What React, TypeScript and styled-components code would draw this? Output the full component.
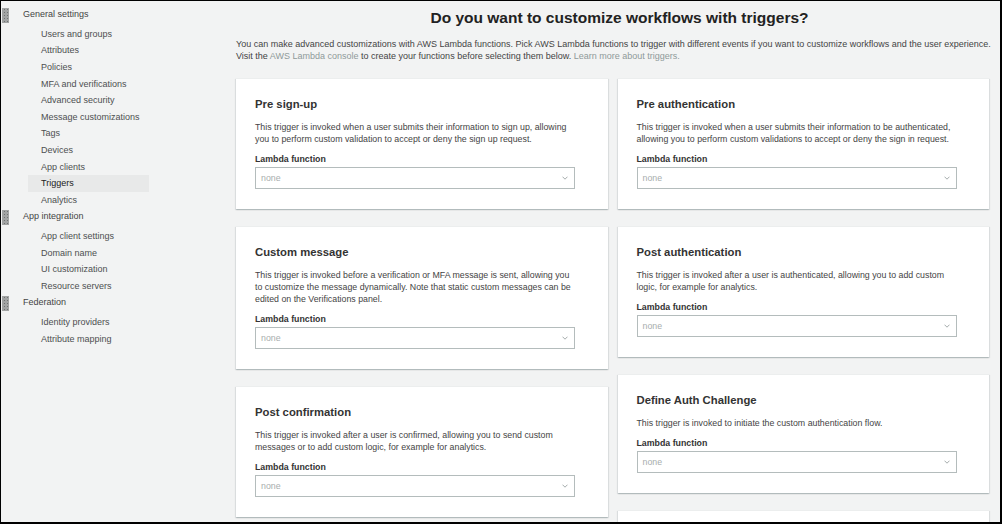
import React from "react";
import styled, { createGlobalStyle } from "styled-components";

const GlobalStyle = createGlobalStyle`
  html, body { margin: 0; padding: 0; }
  body { font-family: "Liberation Sans", Arial, sans-serif; background: #ffffff; }
  * { box-sizing: border-box; }
`;

const Frame = styled.div`
  width: 1002px;
  height: 524px;
  border-style: solid;
  border-color: #000;
  border-width: 1px 2px 2px 1px;
  background: #f2f3f3;
  display: flex;
  overflow: hidden;
  color: #444;
`;

const Sidebar = styled.nav`
  width: 220px;
  flex-shrink: 0;
  padding-top: 5px;
  display: flex;
  flex-direction: column;
`;

const GroupHeader = styled.div`
  height: 16.6px;
  margin-bottom: 3px;
  display: flex;
  align-items: center;
  font-size: 9px;
  color: #444;
`;

const Handle = styled.span`
  width: 7px;
  height: 15px;
  margin: 2px 14px 0 1px;
  background-color: #a2a4a4;
  background-image: radial-gradient(circle, #6f7272 0.7px, transparent 0.9px);
  background-size: 3px 3px;
  background-position: 1px 0;
`;

const NavItem = styled.div<{ $active?: boolean }>`
  height: 16.6px;
  width: 121px;
  margin-left: 27px;
  padding-left: 13px;
  display: flex;
  align-items: center;
  font-size: 9px;
  color: ${(p) => (p.$active ? "#222" : "#4d4f50")};
  background: ${(p) => (p.$active ? "#e8e9e9" : "transparent")};
`;

const Main = styled.main`
  flex: 1;
  padding: 7px 11px 0 15px;
  display: flex;
  flex-direction: column;
  min-width: 0;
`;

const Heading = styled.h1`
  margin: 0;
  font-size: 15.5px;
  line-height: 20px;
  font-weight: 700;
  color: #222;
  text-align: center;
  padding-left: 14px;
`;

const Intro = styled.p`
  margin: 10px 0 0 0;
  font-size: 9px;
  line-height: 12px;
  color: #444;
  white-space: nowrap;
`;

const Link = styled.a`
  color: #8f9a9a;
  text-decoration: none;
`;

const Columns = styled.div`
  margin-top: 16px;
  display: grid;
  grid-template-columns: 1fr 1fr;
  column-gap: 10px;
  align-items: start;
`;

const Column = styled.div`
  display: flex;
  flex-direction: column;
  gap: 17px;
`;

const Card = styled.section`
  background: #fff;
  border-top: 1px solid #eceeee;
  box-shadow: 0 1px 1px rgba(0, 28, 36, 0.14), 1px 1px 1px rgba(0, 28, 36, 0.07),
    -1px 1px 1px rgba(0, 28, 36, 0.07);
  padding: 17px 20px 20px 19px;
`;

const CardStub = styled(Card)`
  height: 40px;
`;

const CardTitle = styled.h2`
  margin: 0;
  font-size: 11.3px;
  line-height: 16px;
  font-weight: 700;
  color: #333;
`;

const CardText = styled.p`
  margin: 9px 0 0 0;
  max-width: 324px;
  font-size: 8.8px;
  line-height: 12px;
  color: #444;
`;

const FieldLabel = styled.div`
  margin-top: 8px;
  font-size: 8.8px;
  line-height: 12px;
  font-weight: 700;
  color: #333;
`;

const SelectBox = styled.div`
  margin-top: 2px;
  width: 320px;
  height: 22px;
  border: 1px solid #b4bcbc;
  background: #fff;
  display: flex;
  align-items: center;
  justify-content: space-between;
  padding: 0 6px 0 5px;
  font-size: 8.8px;
  color: #a8aeae;
`;

const Chevron = () => (
  <svg width="6" height="4" viewBox="0 0 6 4" aria-hidden="true">
    <polyline points="0.5,0.7 3,3.2 5.5,0.7" fill="none" stroke="#9aa1a1" strokeWidth="0.9" />
  </svg>
);

type Trigger = { title: string; text: string };

const leftTriggers: Trigger[] = [
  {
    title: "Pre sign-up",
    text: "This trigger is invoked when a user submits their information to sign up, allowing you to perform custom validation to accept or deny the sign up request.",
  },
  {
    title: "Custom message",
    text: "This trigger is invoked before a verification or MFA message is sent, allowing you to customize the message dynamically. Note that static custom messages can be edited on the Verifications panel.",
  },
  {
    title: "Post confirmation",
    text: "This trigger is invoked after a user is confirmed, allowing you to send custom messages or to add custom logic, for example for analytics.",
  },
];

const rightTriggers: Trigger[] = [
  {
    title: "Pre authentication",
    text: "This trigger is invoked when a user submits their information to be authenticated, allowing you to perform custom validations to accept or deny the sign in request.",
  },
  {
    title: "Post authentication",
    text: "This trigger is invoked after a user is authenticated, allowing you to add custom logic, for example for analytics.",
  },
  {
    title: "Define Auth Challenge",
    text: "This trigger is invoked to initiate the custom authentication flow.",
  },
];

const TriggerCard = ({ t }: { t: Trigger }) => (
  <Card>
    <CardTitle>{t.title}</CardTitle>
    <CardText>{t.text}</CardText>
    <FieldLabel>Lambda function</FieldLabel>
    <SelectBox>
      <span>none</span>
      <Chevron />
    </SelectBox>
  </Card>
);

const nav = [
  {
    group: "General settings",
    items: [
      "Users and groups",
      "Attributes",
      "Policies",
      "MFA and verifications",
      "Advanced security",
      "Message customizations",
      "Tags",
      "Devices",
      "App clients",
      "Triggers",
      "Analytics",
    ],
  },
  {
    group: "App integration",
    items: ["App client settings", "Domain name", "UI customization", "Resource servers"],
  },
  { group: "Federation", items: ["Identity providers", "Attribute mapping"] },
];

export default function App() {
  return (
    <>
      <GlobalStyle />
      <Frame>
        <Sidebar>
          {nav.map((g) => (
            <React.Fragment key={g.group}>
              <GroupHeader>
                <Handle />
                {g.group}
              </GroupHeader>
              {g.items.map((i) => (
                <NavItem key={i} $active={i === "Triggers"}>
                  {i}
                </NavItem>
              ))}
            </React.Fragment>
          ))}
        </Sidebar>
        <Main>
          <Heading>Do you want to customize workflows with triggers?</Heading>
          <Intro>
            You can make advanced customizations with AWS Lambda functions. Pick AWS Lambda functions to trigger with
            different events if you want to customize workflows and the user experience.
            <br />
            Visit the <Link href="#">AWS Lambda console</Link> to create your functions before selecting them below.{" "}
            <Link href="#">Learn more about triggers.</Link>
          </Intro>
          <Columns>
            <Column>
              {leftTriggers.map((t) => (
                <TriggerCard key={t.title} t={t} />
              ))}
            </Column>
            <Column>
              {rightTriggers.map((t) => (
                <TriggerCard key={t.title} t={t} />
              ))}
              <CardStub />
            </Column>
          </Columns>
        </Main>
      </Frame>
    </>
  );
}
